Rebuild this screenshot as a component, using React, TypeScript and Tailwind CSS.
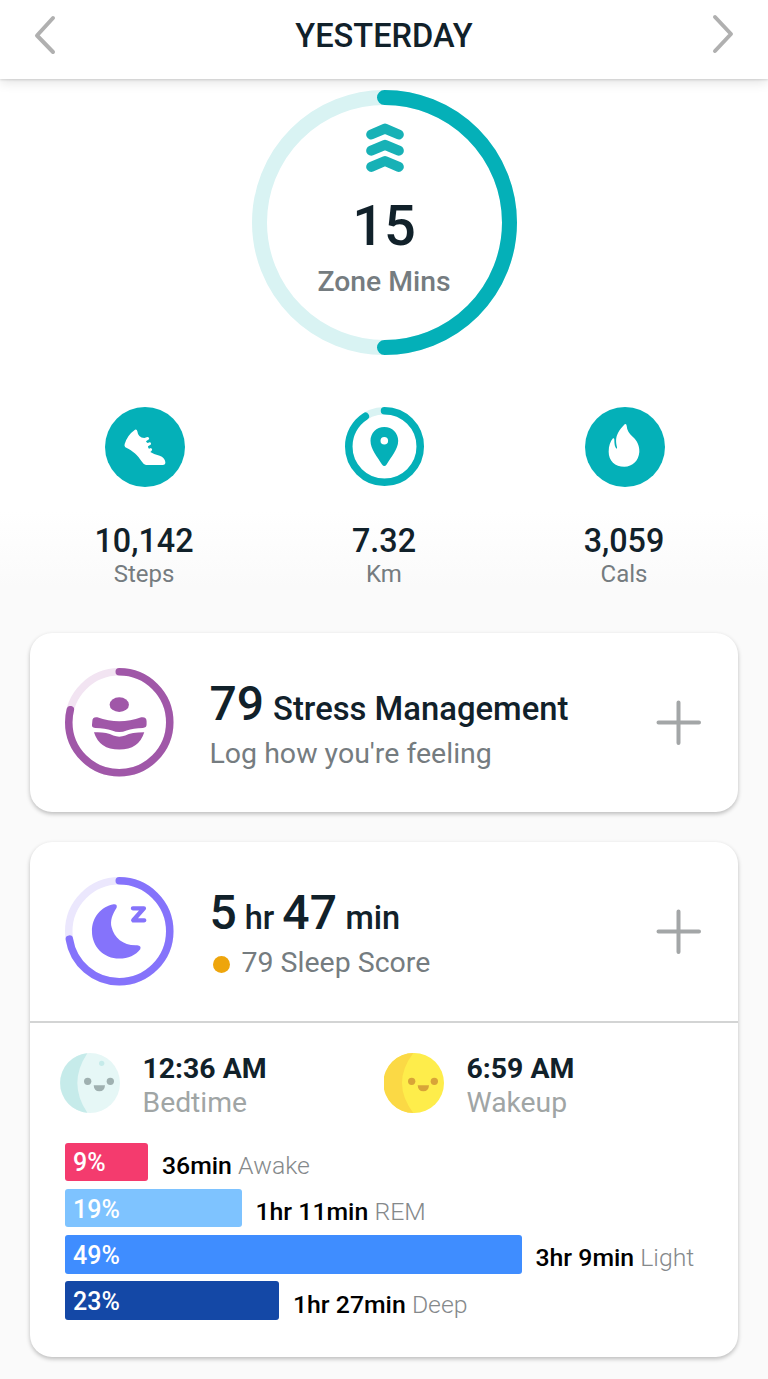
import React from 'react';

const Ring: React.FC<{
  size: number,
  stroke: number,
  percent: number,
  color: string,
  track: string,
  children?: React.ReactNode
}> = ({ size, stroke, percent, color, track, children }) => {
  const r = (size - stroke) / 2;
  const c = size / 2;
  return (
    <svg width={size} height={size} viewBox={`0 0 ${size} ${size}`} className="shrink-0 block" fill="none">
      <circle cx={c} cy={c} r={r} stroke={track} strokeWidth={stroke} />
      <circle
        cx={c}
        cy={c}
        r={r}
        stroke={color}
        strokeWidth={stroke}
        strokeLinecap="round"
        pathLength={100}
        strokeDasharray={`${percent} 100`}
        transform={`rotate(-90 ${c} ${c})`}
      />
      {children}
    </svg>
  );
};

const ShoeIcon = () => (
  <svg width="81" height="80" viewBox="-3 0 243 240" className="block">
    <circle cx="120" cy="120" r="120" fill="#04b0b8" />
    <path
      fill="#fff"
      d="M90 68Q96 66 97 73Q99 92 118 93L127 90Q134 91 132 97L123 103Q124 107 128 108L134 106Q140 107 137 113L129 118Q129 123 132 125L138 123Q144 126 140 131L136 135Q146 142 164 146Q179 151 181 165Q182 174 173 174H123Q115 172 109 162C98 146 86 133 61 121Q57 117 59 111Q67 84 90 68Z"
    />
  </svg>
);

const FlameIcon = () => (
  <svg width="81" height="80" viewBox="-3 0 243 240" className="block">
    <circle cx="120" cy="120" r="120" fill="#04b0b8" />
    <path
      fill="#fff"
      d="M119 52Q124 49 125 56C126 70 132 79 143 89C157 101 164 117 163 135C161 161 143 179 118 179C90 179 71 161 71 134C71 117 76 103 84 94Q88 92 88 98C88 110 89 120 95 125Q97 125 96 121C92 104 92 91 99 78C104 68 112 60 119 52Z"
    />
  </svg>
);

const PinRing = () => (
  <Ring size={79} stroke={7.5} percent={91} color="#04b0b8" track="#d9f3f3">
    <path
      fill="#04b0b8"
      fillRule="evenodd"
      d="M39.3 20C31.3 20 25.5 26.2 25.5 33.8C25.5 42.5 32.5 50 37 57.6Q39.3 60.6 41.6 57.6C46 50 53.2 42.5 53.2 33.8C53.2 26.2 47.3 20 39.3 20ZM39.3 30A3.8 3.8 0 1 1 39.3 37.6A3.8 3.8 0 1 1 39.3 30Z"
    />
  </Ring>
);

const Face: React.FC<{ base: string, shade: string, ink: string, edge: string, spot?: string }> = ({ base, shade, ink, edge, spot }) => (
  <svg width="60" height="60" viewBox="0 0 180 180" className="shrink-0 block">
    <circle cx="90" cy="90" r="90" fill={base} />
    <path fill={shade} d={edge} />
    {spot && <circle cx="125" cy="31" r="8" fill={spot} />}
    <circle cx="83" cy="85" r="11" fill={ink} />
    <circle cx="151" cy="85" r="11" fill={ink} />
    <path fill={ink} d="M101 97H135Q134 115 118 115Q102 115 101 97Z" />
  </svg>
);

const PlusIcon = () => (
  <svg width="46" height="46" viewBox="0 0 46 46" className="ml-auto mr-[36.5px] block" stroke="#a3a6a7" strokeWidth="4" strokeLinecap="round">
    <path d="M22.5 2.5V43M2.5 22.5H43" />
  </svg>
);

const stats = [
  { value: '10,142', label: 'Steps', icon: <ShoeIcon /> },
  { value: '7.32', label: 'Km', icon: <PinRing /> },
  { value: '3,059', label: 'Cals', icon: <FlameIcon /> },
];

const stages = [
  { percent: '9%', width: 83, color: 'bg-[#f43b6e]', time: '36min', name: 'Awake' },
  { percent: '19%', width: 176.5, color: 'bg-[#7ec3ff]', time: '1hr 11min', name: 'REM' },
  { percent: '49%', width: 456.5, color: 'bg-[#3f8dff]', time: '3hr 9min', name: 'Light' },
  { percent: '23%', width: 214, color: 'bg-[#1448a6]', time: '1hr 27min', name: 'Deep' },
];

export default function App() {
  return (
    <div className="h-[1379px] w-[768px] overflow-hidden bg-[#fafafa] font-['Roboto',sans-serif] text-[#11212a]">
      <header className="relative flex h-[79px] items-center justify-between bg-white px-[34px] pb-[8px] shadow-[0_1px_2px_rgba(0,0,0,0.12),0_2px_12px_rgba(0,0,0,0.14)]">
        <svg width="22" height="40" viewBox="0 0 22 40" className="-mt-[2px]" fill="none" stroke="#b0b0b0" strokeWidth="4" strokeLinecap="round" strokeLinejoin="round">
          <path d="M19 3L3 20.5L19 37" />
        </svg>
        <h1 className="text-[32.6px] font-medium leading-[36px]">YESTERDAY</h1>
        <svg width="22" height="40" viewBox="0 0 22 40" className="-mt-[3px]" fill="none" stroke="#b0b0b0" strokeWidth="4" strokeLinecap="round" strokeLinejoin="round">
          <path d="M3 3L19 20L3 37" />
        </svg>
      </header>

      <section className="bg-linear-to-b from-white from-85% to-[#fafafa] px-6 pt-[11px]">
        <div className="grid justify-center">
          <div className="[grid-area:1/1]">
            <Ring size={265} stroke={15} percent={50} color="#04b0b8" track="#d9f3f3" />
          </div>
          <div className="flex flex-col items-center pt-[33px] [grid-area:1/1]">
            <svg width="38" height="50" viewBox="0 0 38 50" className="ml-px" fill="none" stroke="#17b1b6" strokeWidth="10" strokeLinecap="round" strokeLinejoin="round">
              <path d="M5.2 11.5L19 5.6L32.8 11.5M5.2 27.7L19 21.8L32.8 27.7M5.2 43.9L19 38L32.8 43.9" />
            </svg>
            <div className="mt-[23px] text-[56px] font-medium leading-[60px]">15</div>
            <div className="mt-[9px] text-[28.3px] font-medium leading-[34px] text-[#757c80]">Zone Mins</div>
          </div>
        </div>

        <div className="mt-[52px] grid grid-cols-3">
          {stats.map(s => (
            <div key={s.label} className="flex flex-col items-center">
              <div className="flex h-20 items-start">{s.icon}</div>
              <div className="mt-[36px] text-[32.3px] font-medium leading-[36px]">{s.value}</div>
              <div className="mt-px text-[24px] leading-[28px] text-[#757c80]">{s.label}</div>
            </div>
          ))}
        </div>
      </section>

      <main className="px-[30px] pt-[45px]">
        <div className="flex h-[179px] items-center rounded-[22px] bg-white pl-[35px] shadow-[0_2px_4px_rgba(0,0,0,0.25)]">
          <Ring size={108.5} stroke={7.5} percent={79} color="#a057a8" track="#f2e4f2">
            <g fill="#a057a8" transform="scale(.333)">
              <ellipse cx="163" cy="110" rx="29" ry="22" />
              <path d="M82 160Q82 146 97 148Q130 160 163 160Q196 160 229 148Q245 146 245 160V170Q245 180 234 180Q205 180 185 188Q163 197 141 188Q120 180 92 180Q81 180 81 172Z" />
              <path d="M87 193H98Q125 193 145 203Q163 210 181 203Q200 193 238 193Q222 245 163 245Q103 245 87 193Z" />
            </g>
          </Ring>
          <div className="ml-[36px] pt-[5px]">
            <p className="flex h-[48px] items-baseline pt-px leading-[48px]">
              <span className="text-[48px] font-medium">79</span>
              <span className="ml-[9px] text-[32.8px] font-medium">Stress Management</span>
            </p>
            <p className="mt-[10px] text-[28.5px] leading-[34px] text-[#757c80]">Log how you're feeling</p>
          </div>
          <PlusIcon />
        </div>

        <div className="mt-[30px] h-[515px] rounded-[22px] bg-white shadow-[0_2px_4px_rgba(0,0,0,0.25)]">
          <div className="flex h-[179px] items-center pl-[35px]">
            <Ring size={108.5} stroke={7.5} percent={72.5} color="#8573fb" track="#ebe7fd">
              <g transform="scale(.333)">
                <path fill="#8573fb" d="M146 82Q158 81 155 92C142 112 135 131 140 151C148 184 176 207 217 205Q230 206 226 217C213 235 189 245 163 245C116 245 81 210 81 163C81 121 108 90 146 82Z" />
                <path stroke="#8573fb" strokeWidth="13" strokeLinecap="round" strokeLinejoin="round" d="M204 94H237L205 130H238" />
              </g>
            </Ring>
            <div className="ml-[36px] pt-[5px]">
              <p className="flex h-[48px] items-baseline pt-px font-medium leading-[48px]">
                <span className="text-[48px]">5</span>
                <span className="ml-[8px] text-[32.5px]">hr</span>
                <span className="ml-[8px] text-[48px]">47</span>
                <span className="ml-[8.5px] text-[32.5px]">min</span>
              </p>
              <p className="mt-[10px] flex items-center text-[28.5px] leading-[34px] text-[#757c80]">
                <span className="ml-[3px] mr-[12px] mt-[2px] h-[17px] w-[17px] rounded-full bg-[#eea50c]" />
                79 Sleep Score
              </p>
            </div>
            <PlusIcon />
          </div>

          <div className="border-t-2 border-[#d3d4d4] pt-[30px]">
            <div className="flex h-[60px] pl-[29.5px]">
              <div className="flex w-[324px]">
                <Face base="#e6f7f6" shade="#c6ebea" ink="#9fb0b0" spot="#c6ebea" edge="M82 0.4A90 90 0 0 0 82 179.6Q52 135 52 90Q52 45 82 0.4Z" />
                <div className="-mt-[1.5px] ml-[23px]">
                  <p className="text-[28.4px] font-bold leading-[34px]">12:36 AM</p>
                  <p className="text-[28.3px] leading-[34px] text-[#a0a5a5]">Bedtime</p>
                </div>
              </div>
              <div className="flex">
                <Face base="#feed4b" shade="#fbd945" ink="#d8a438" edge="M88 0A90 90 0 0 0 88 180Q54 135 54 90Q54 45 88 0Z" />
                <div className="-mt-[1.5px] ml-[23px]">
                  <p className="text-[28.4px] font-bold leading-[34px]">6:59 AM</p>
                  <p className="text-[28.3px] leading-[34px] text-[#a0a5a5]">Wakeup</p>
                </div>
              </div>
            </div>

            <div className="mt-[29.5px] flex flex-col gap-[7.8px] pl-[35px]">
              {stages.map(s => (
                <div key={s.name} className="flex h-[38.5px] items-center">
                  <div className={`flex h-full items-center rounded-[3px] pl-[8px] pt-[3px] ${s.color}`} style={{ width: s.width }}>
                    <span className="text-[25px] font-medium leading-[30px] text-white">{s.percent}</span>
                  </div>
                  <p className="ml-[14px] pt-[8px] text-[24.8px] leading-[30px] text-black">
                    <span className="font-medium">{s.time}</span>{' '}
                    <span className="font-light text-[#85898b]">{s.name}</span>
                  </p>
                </div>
              ))}
            </div>
          </div>
        </div>
      </main>
    </div>
  );
}
